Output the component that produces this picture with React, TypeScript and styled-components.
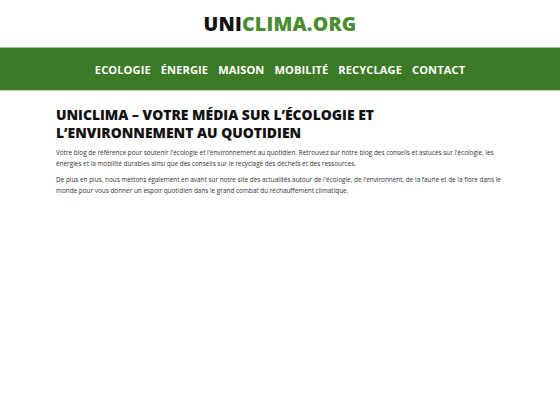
import styled, { createGlobalStyle } from "styled-components";

const GlobalStyle = createGlobalStyle`
  html, body {
    margin: 0;
    padding: 0;
    background: #ffffff;
  }
  body {
    font-family: "Open Sans", "Liberation Sans", sans-serif;
    color: #222222;
  }
`;

const menu = ["ECOLOGIE", "ÉNERGIE", "MAISON", "MOBILITÉ", "RECYCLAGE", "CONTACT"];

const App = () => {
  return (
    <>
      <GlobalStyle />
      <S.Header>
        <S.Logo>
          <span className="dark">UNI</span>
          <span className="green">CLIMA.ORG</span>
        </S.Logo>
      </S.Header>

      <S.Nav>
        {menu.map((item) => (
          <S.NavItem key={item}>{item}</S.NavItem>
        ))}
      </S.Nav>

      <S.Main>
        <S.Title>
          UNICLIMA – VOTRE MÉDIA SUR L’ÉCOLOGIE ET
          <br />
          L’ENVIRONNEMENT AU QUOTIDIEN
        </S.Title>
        <S.Text>
          Votre blog de référence pour soutenir l'écologie et l'environnement au
          quotidien. Retrouvez sur notre blog des conseils et astuces sur
          l'écologie, les énergies et la mobilité durables ainsi que des conseils
          sur le recyclage des déchets et des ressources.
        </S.Text>
        <S.Text>
          De plus en plus, nous mettons également en avant sur notre site des
          actualités autour de l'écologie, de l'environnent, de la faune et de la
          flore dans le monde pour vous donner un espoir quotidien dans le grand
          combat du réchauffement climatique.
        </S.Text>
      </S.Main>
    </>
  );
};

export default App;

const S = {
  Header: styled.header`
    display: flex;
    justify-content: center;
    align-items: center;
    height: 47px;
  `,
  Logo: styled.div`
    font-family: "Open Sans", sans-serif;
    font-weight: 800;
    font-size: 19.5px;
    letter-spacing: 0.2px;
    line-height: 1;
    .dark {
      color: #111111;
    }
    .green {
      color: #4a8c30;
    }
  `,
  Nav: styled.nav`
    display: flex;
    justify-content: center;
    align-items: center;
    gap: 10px;
    height: 42px;
    background: #3d7a26;
    border-top: 1px solid #9fc38f;
    border-bottom: 1px solid #b9d4ad;
  `,
  NavItem: styled.a`
    font-family: "Open Sans", sans-serif;
    font-weight: 700;
    font-size: 11.1px;
    color: #ffffff;
    letter-spacing: 0.1px;
    cursor: pointer;
  `,
  Main: styled.main`
    width: 448px;
    margin: 0 auto;
    padding-top: 15px;
  `,
  Title: styled.h1`
    margin: 0 0 6px;
    font-family: "Open Sans", sans-serif;
    font-weight: 800;
    font-size: 13.9px;
    line-height: 18px;
    color: #111111;
  `,
  Text: styled.p`
    margin: 0 0 6px;
    font-size: 6.4px;
    line-height: 10.5px;
    color: #333333;
  `,
};
